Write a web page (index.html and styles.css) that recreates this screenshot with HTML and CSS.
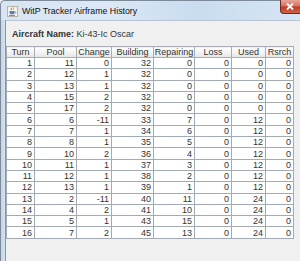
FILE: index.html
```html
<!DOCTYPE html>
<html lang="en">
<head>
  <meta charset="UTF-8" />
  <title>WitP Tracker Airframe History</title>
  <link rel="stylesheet" href="styles.css">
</head>
<body>

  <div class="window">
    <!-- Barra de titulo -->
    <div class="titlebar">
      <svg class="app-icon" width="11" height="11" viewBox="0 0 11 11" aria-hidden="true">
        <rect x="0.5" y="0.5" width="10" height="10" fill="#f4f1ea" stroke="#b9b3a8"/>
        <path d="M4 2 q1 1 0 2 M6 1.5 q1 1 0 2" stroke="#d0522a" fill="none" stroke-width="0.8"/>
        <path d="M2.5 5 h5 v1.5 q0 2 -2.5 2 q-2.5 0 -2.5 -2 z" fill="#5a7fb5"/>
        <path d="M7.5 5.5 q1.3 0 1.3 1 q0 1 -1.5 1" stroke="#5a7fb5" fill="none" stroke-width="0.7"/>
        <rect x="2" y="9" width="6" height="0.8" fill="#d0522a"/>
      </svg>
      <span class="title">WitP Tracker Airframe History</span>
      <div class="close-btn" aria-label="Close">
        <svg width="8" height="7" viewBox="0 0 8 7" aria-hidden="true">
          <path d="M1 0.5 L7 6.5 M7 0.5 L1 6.5" stroke="#fff" stroke-width="1.8"/>
        </svg>
      </div>
    </div>

    <div class="frame">
      <div class="frame-left"></div>
      <div class="content">
        <div class="aircraft"><b>Aircraft Name:</b> Ki-43-Ic Oscar</div>

        <table class="history">
          <colgroup>
            <col style="width:28px"><col style="width:42px"><col style="width:35px"><col style="width:42px">
            <col style="width:41px"><col style="width:37px"><col style="width:34px"><col style="width:28px">
          </colgroup>
          <thead>
            <tr>
              <th>Turn</th><th>Pool</th><th>Change</th><th>Building</th>
              <th>Repairing</th><th>Loss</th><th>Used</th><th>Rsrch</th>
            </tr>
          </thead>
          <tbody>
            <tr><td>1</td><td>11</td><td>0</td><td>32</td><td>0</td><td>0</td><td>0</td><td>0</td></tr>
            <tr><td>2</td><td>12</td><td>1</td><td>32</td><td>0</td><td>0</td><td>0</td><td>0</td></tr>
            <tr><td>3</td><td>13</td><td>1</td><td>32</td><td>0</td><td>0</td><td>0</td><td>0</td></tr>
            <tr><td>4</td><td>15</td><td>2</td><td>32</td><td>0</td><td>0</td><td>0</td><td>0</td></tr>
            <tr><td>5</td><td>17</td><td>2</td><td>32</td><td>0</td><td>0</td><td>0</td><td>0</td></tr>
            <tr><td>6</td><td>6</td><td>-11</td><td>33</td><td>7</td><td>0</td><td>12</td><td>0</td></tr>
            <tr><td>7</td><td>7</td><td>1</td><td>34</td><td>6</td><td>0</td><td>12</td><td>0</td></tr>
            <tr><td>8</td><td>8</td><td>1</td><td>35</td><td>5</td><td>0</td><td>12</td><td>0</td></tr>
            <tr><td>9</td><td>10</td><td>2</td><td>36</td><td>4</td><td>0</td><td>12</td><td>0</td></tr>
            <tr><td>10</td><td>11</td><td>1</td><td>37</td><td>3</td><td>0</td><td>12</td><td>0</td></tr>
            <tr><td>11</td><td>12</td><td>1</td><td>38</td><td>2</td><td>0</td><td>12</td><td>0</td></tr>
            <tr><td>12</td><td>13</td><td>1</td><td>39</td><td>1</td><td>0</td><td>12</td><td>0</td></tr>
            <tr><td>13</td><td>2</td><td>-11</td><td>40</td><td>11</td><td>0</td><td>24</td><td>0</td></tr>
            <tr><td>14</td><td>4</td><td>2</td><td>41</td><td>10</td><td>0</td><td>24</td><td>0</td></tr>
            <tr><td>15</td><td>5</td><td>1</td><td>43</td><td>15</td><td>0</td><td>24</td><td>0</td></tr>
            <tr><td>16</td><td>7</td><td>2</td><td>45</td><td>13</td><td>0</td><td>24</td><td>0</td></tr>
          </tbody>
        </table>
      </div>
    </div>
  </div>

</body>
</html>
```

FILE: styles.css
```css
body {
  margin: 0;
  background: #f0f0f0;
  font-family: "Liberation Sans", Arial, sans-serif;
}

.window {
  width: 300px;
  height: 261px;
  display: flex;
  flex-direction: column;
  overflow: hidden;
  background: #f0f0f0;
}

/* Barra de titulo estilo Aero */
.titlebar {
  height: 20px;
  flex: none;
  display: flex;
  align-items: center;
  position: relative;
  border-top: 1px solid #7d8a99;
  border-left: 1px solid #7d8a99;
  border-top-left-radius: 5px;
  background: linear-gradient(90deg, #d7e4f2 0%, #dce8f5 35%, #c9dcef 65%, #d6e5f3 100%);
  box-sizing: border-box;
}

.app-icon {
  margin-left: 6px;
  margin-top: 1px;
  flex: none;
}

.title {
  margin-left: 4px;
  font-size: 8.8px;
  color: #111;
  white-space: nowrap;
}

.close-btn {
  position: absolute;
  top: -1px;
  right: -4px;
  width: 24px;
  height: 14px;
  border: 1px solid #6b2a22;
  border-top: none;
  border-radius: 0 0 4px 4px;
  background: linear-gradient(180deg, #e8a699 0%, #d4715f 45%, #c33b25 55%, #d0624a 100%);
  display: flex;
  align-items: center;
  justify-content: center;
  box-sizing: border-box;
  padding-right: 4px;
}

.frame {
  flex: 1;
  display: flex;
}

.frame-left {
  width: 6px;
  flex: none;
  border-left: 1px solid #7d8a99;
  background: linear-gradient(90deg, #c5d6e8, #d4e2f1);
  border-right: 1px solid #8a96a4;
  box-sizing: border-box;
}

.content {
  flex: 1;
  border-top: 1px solid #b9c5d3;
  background: #f0f0f0;
  padding: 8px 0 0 0;
}

.aircraft {
  margin-left: 6px;
  font-size: 9px;
  color: #333;
  line-height: 10px;
  height: 17px;
}

.aircraft b {
  font-weight: bold;
}

.history {
  border-collapse: collapse;
  table-layout: fixed;
  width: 287px;
  font-size: 9px;
  color: #333;
  background: #fff;
}

.history th {
  height: 10px;
  padding: 0;
  font-weight: normal;
  text-align: center;
  color: #333;
  background: linear-gradient(180deg, #ffffff, #f1f1f1 60%, #e4e4e4);
  border: 1px solid #a9adb3;
  line-height: 10px;
}

.history td {
  height: 10.3px;
  padding: 0 2px 0 0;
  line-height: 10px;
  text-align: right;
  border: 1px solid #a4aab2;
}
```
